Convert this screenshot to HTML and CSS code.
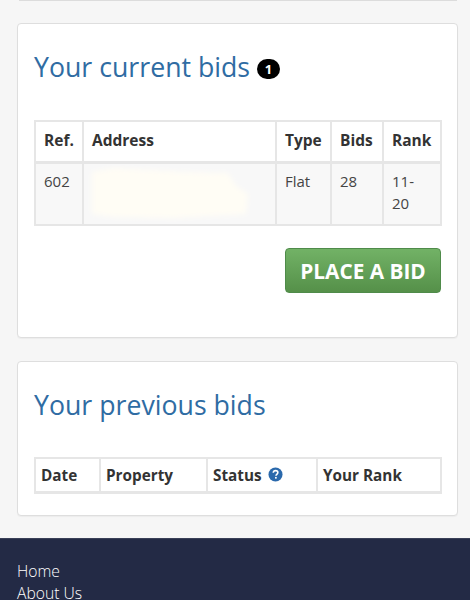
FILE: index.html
```html
<!DOCTYPE html>
<html lang="en">
<head>
<meta charset="utf-8">
<title>Your bids</title>
<link rel="stylesheet" href="styles.css">
</head>
<body>
<div class="page">
  <div class="top-card"></div>
  <section class="card card-current">
    <h2 class="title">Your current bids <span class="badge">1</span></h2>
    <table class="bids">
      <colgroup><col class="c-ref"><col class="c-addr"><col class="c-type"><col class="c-bids"><col class="c-rank"></colgroup>
      <thead><tr><th>Ref.</th><th>Address</th><th>Type</th><th>Bids</th><th>Rank</th></tr></thead>
      <tbody><tr><td>602</td><td class="addr"><svg class="smudge" width="170" height="62" viewBox="0 0 170 62"><defs><filter id="b"><feGaussianBlur stdDeviation="2.5"/></filter></defs><path d="M8 8 L30 4 L100 8 L144 9 L152 22 L164 30 L162 50 L90 54 L30 53 L8 50 Z" fill="#fffdf5" filter="url(#b)"/></svg></td><td>Flat</td><td>28</td><td class="rank">11-20</td></tr></tbody>
    </table>
    <div class="actions"><a class="btn" href="#">PLACE A BID</a></div>
  </section>
  <section class="card card-prev">
    <h2 class="title">Your previous bids</h2>
    <table class="prev">
      <colgroup><col class="p-date"><col class="p-prop"><col class="p-status"><col class="p-rank"></colgroup>
      <thead><tr><th>Date</th><th>Property</th><th>Status <svg class="help" width="15" height="15" viewBox="0 0 16 16"><circle cx="8" cy="8" r="7.500" fill="#2a69ac"/><path d="M5.600 6.200c.1-1.500 1.100-2.300 2.500-2.300s2.400.8 2.400 2c0 1.900-2 1.900-2 3.400" fill="none" stroke="#fff" stroke-width="1.700"/><rect x="7.500" y="10.600" width="1.800" height="1.800" fill="#fff"/></svg></th><th>Your Rank</th></tr></thead>
    </table>
  </section>
  <footer class="footer">
    <a href="#">Home</a>
    <a href="#">About Us</a>
  </footer>
</div>
</body>
</html>
```
FILE: styles.css
```css
* { box-sizing: border-box; }
html, body { margin: 0; height: 100%; overflow: hidden; }
body { background: #f6f6f6; font-family: "Open Sans", "Liberation Sans", sans-serif; font-size: 15px; color: #333; }
.page { height: 600px; overflow: hidden; }
.top-card { height: 1px; margin: 0 13px 0 19px; background: #dcdcdc; }
.card { position: relative; background: #fff; border: 1px solid #dedede; border-radius: 4px; margin: 0 12px 0 17px; padding: 0 16px; box-shadow: 0 1px 1px rgba(0,0,0,.04); }
.card-current { margin-top: 22px; height: 315px; }
.card-prev { margin-top: 23px; height: 155px; }
.title { margin: 0; font-weight: 400; font-size: 26.700px; line-height: 38px; color: #2f6ca3; white-space: nowrap; }
.card-current .title { padding-top: 24px; height: 96px; }
.card-prev .title { padding-top: 24px; height: 95px; }
.badge { display: inline-block; width: 23px; height: 20px; line-height: 20px; border-radius: 10px; background: #000; color: #fff; font-size: 13px; font-weight: 700; text-align: center; vertical-align: 3px; }
table { border-collapse: collapse; table-layout: fixed; width: 406px; }
th, td { border: 2px solid #e6e6e6; text-align: left; vertical-align: top; }
th { background: #fff; font-weight: 700; font-size: 15.500px; line-height: 22px; color: #333; white-space: nowrap; }
.bids th { padding: 7px 8px 9px; height: 41px; }
.bids thead th { border-bottom-width: 3px; }
.bids td { background: #f8f8f8; padding: 6px 8px 0; height: 63px; font-size: 15px; line-height: 22px; color: #444; }
.bids td.rank { padding-right: 18px; }
.bids td.addr { position: relative; padding: 0; }
.smudge { position: absolute; left: 0; top: 0; }
.c-ref { width: 48px; } .c-addr { width: 193px; } .c-type { width: 55px; } .c-bids { width: 52px; } .c-rank { width: 58px; }
.actions { display: flex; justify-content: flex-end; width: 407px; margin-top: 22px; }
.btn { display: block; width: 156px; height: 45px; line-height: 44px; text-align: center; border: 1px solid #4f8b4a; border-radius: 4px; background: linear-gradient(#72b266, #559049); color: #fff; font-size: 20.800px; font-weight: 700; text-decoration: none; }
.prev th { padding: 4px 5px; height: 34px; line-height: 24px; font-size: 15.300px; }
.prev thead th { border-bottom-width: 3px; }
.prev th:nth-child(n+2) { padding-left: 5px; }
.help { vertical-align: -1px; margin-left: 2px; }
.p-date { width: 65px; } .p-prop { width: 107px; } .p-status { width: 110px; } .p-rank { width: 124px; }
.footer { margin-top: 22px; height: 200px; background: #232a45; border-top: 1px solid #3a4058; padding: 22px 17px; display: flex; flex-direction: column; }
.footer a { color: #fff; text-decoration: none; font-size: 15.700px; font-weight: 300; line-height: 21.500px; }
```
